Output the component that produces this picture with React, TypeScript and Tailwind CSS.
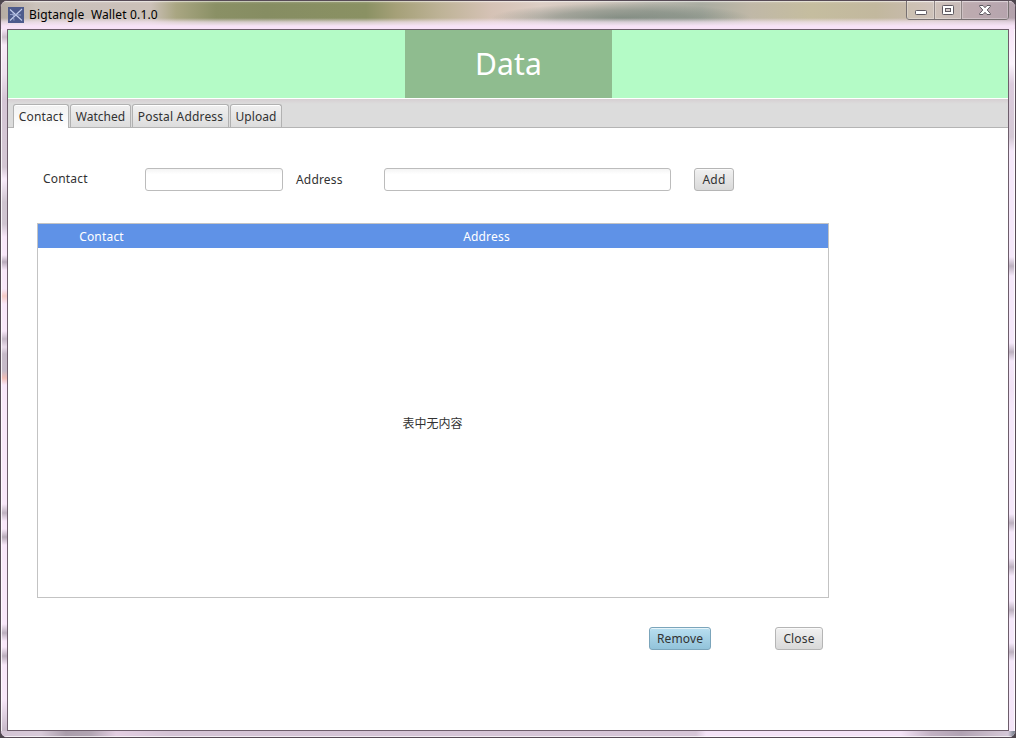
import type { ReactNode } from "react";

const tabs = [
  { label: "Contact", box: "w-[56px]", text: "tracking-[0.15px]" },
  { label: "Watched", box: "w-[61px]", text: "tracking-[0px]" },
  { label: "Postal Address", box: "w-[97px]", text: "tracking-[0.18px]" },
  { label: "Upload", box: "w-[52px]", text: "tracking-[0.05px]" },
];

function AppIcon() {
  return (
    <svg width="16" height="16" viewBox="0 0 16 16" className="shrink-0">
      <rect width="16" height="16" fill="#4d5b8c" />
      <path d="M2 2.5 L14 13.5 M14 2 L2 13.5" stroke="#c3cdec" strokeWidth="1.1" fill="none" />
      <path d="M2 7.5 L13 8 M5 6 L6 13.5" stroke="#a3b0d8" strokeWidth="0.8" fill="none" />
    </svg>
  );
}

function WindowControls() {
  return (
    <div className="flex h-[19px] w-[103px] shrink-0 rounded-b-[4px] border border-t-0 border-[#777071] bg-white/10">
      <div className="flex w-[28px] justify-center border-r border-[#8d8484] pt-[9px] shadow-[inset_0_0_0_1px_rgba(255,255,255,0.25)]">
        <svg width="12" height="5" viewBox="0 0 12 5">
          <rect x="0.5" y="0.5" width="11" height="4" rx="0.8" fill="#fff" stroke="#5e5960" />
        </svg>
      </div>
      <div className="flex w-[27px] justify-center border-r border-[#8d8484] pt-[4px] shadow-[inset_0_0_0_1px_rgba(255,255,255,0.25)]">
        <svg width="12" height="10" viewBox="0 0 12 10">
          <rect x="0.5" y="0.5" width="11" height="9" rx="0.8" fill="#fff" stroke="#5e5960" />
          <rect x="3.5" y="3.5" width="5" height="3" fill="#d5cbc9" stroke="#5e5960" />
        </svg>
      </div>
      <div className="flex flex-1 justify-center bg-[#a890a0]/30 pt-[4px] shadow-[inset_0_0_0_1px_rgba(255,255,255,0.25)]">
        <svg width="12" height="10" viewBox="0 0 12 10">
          <path d="M0.6 0.5 H4 L6 2.7 L8 0.5 H11.4 V1.4 L8.2 5 L11.4 8.6 V9.5 H8 L6 7.3 L4 9.5 H0.6 V8.6 L3.8 5 L0.6 1.4 Z" fill="#fff" stroke="#5e5960" />
        </svg>
      </div>
    </div>
  );
}

function Button({ children, className }: { children: ReactNode; className: string }) {
  return (
    <button type="button" className={`flex h-[23px] shrink-0 items-center justify-center rounded-[3px] border text-[12px] leading-4 tracking-[0.15px] text-[#323232] shadow-[inset_0_1px_0_rgba(255,255,255,0.65)] ${className}`}>
      {children}
    </button>
  );
}

export default function App() {
  return (
    <div className="h-[738px] w-[1016px] overflow-hidden bg-[#4d464d] font-['Noto_Sans','Noto_Sans_CJK_SC',sans-serif]">
      <div className="flex h-full flex-col overflow-hidden rounded-[7px] border border-[#574b56] bg-[#f4e5f6]">
        <header className="h-[28px] shrink-0 bg-[linear-gradient(90deg,#b5aca3_0px,#cbc2bb_35px,#cac0ba_100px,#cbc0b7_150px,#a9a682_175px,#8a9065_215px,#868d62_265px,#8a9163_365px,#a5a078_395px,#beb397_440px,#d5c2b5_490px,#dccdc4_540px,#cfc5bb_590px,#b5b4aa_650px,#a9aca1_700px,#c0b8a7_750px,#c5bd9f_810px,#c2b89e_875px,#c9bbb1_930px,#b3a2ac_1014px)]">
          <div className="flex h-full items-start justify-between bg-[linear-gradient(180deg,rgba(255,255,255,0.75)_0px,rgba(255,255,255,0.1)_1.5px,transparent_3px,transparent_17px,rgba(245,229,244,0.7)_21px,#f7e3f7_25px),radial-gradient(ellipse_130px_15px_at_620px_17px,rgba(112,127,117,0.75),rgba(112,127,117,0.5)_50%,transparent)] pr-[6px]">
            <div className="flex items-center gap-[5px] pt-[6px] pl-[7px]">
              <AppIcon />
              <span className="whitespace-pre text-[12px] leading-4 tracking-[0.15px] text-black">{"Bigtangle  Wallet 0.1.0"}</span>
            </div>
            <WindowControls />
          </div>
        </header>

        <div className="flex min-h-0 flex-1">
          <div className="w-[6px] shrink-0 border-l border-white/80 bg-[linear-gradient(180deg,#f7e4f7_0px,#cdbecb_8px,#f8eaf8_16px,#eee0ee_45px,#d5c5d5_70px,#d3c6d3_138px,#f8ebfa_150px,#cfc4d0_173px,#cfc4d0_195px,#f8e7f9_208px,#f8e7f9_226px,#b9aabb_233px,#f8e7f9_241px,#f8e7f9_260px,#f5cac5_267px,#f8e7f9_275px,#f8e7f9_302px,#c5b7c7_310px,#e9dbea_318px,#c6bac8_325px,#c6bac8_342px,#efbdb6_349px,#f8e7f9_356px,#f8e7f9_475px,#bfb1c0_484px,#f8e7f9_492px,#f8e7f9_500px,#b7aab8_508px,#f8e7f9_516px,#f8e7f9_595px,#bbaebd_604px,#f8e7f9_612px,#f8e7f9_618px,#bbaebd_627px,#f8e7f9_636px,#f8e7f9_670px,#c7b9c8_702px)]" />
          <main className="flex w-[1002px] shrink-0 flex-col border border-[#6d5d6b] bg-white">
            <div className="flex h-[68px] shrink-0 justify-center bg-[#b4fbc6] pl-[1px]">
              <h1 className="flex w-[207px] items-center justify-center bg-[#8fbc8f] text-[30px] leading-10 tracking-[0.2px] text-white">Data</h1>
            </div>
            <nav className="flex h-[30px] shrink-0 gap-px border-t border-b border-t-white border-b-[#b4b4b4] bg-[linear-gradient(180deg,#d6cfd2_0px,#dcdcdc_5px)] pt-[5px] pl-[5px]">
              {tabs.map((tab, index) => (
                <button
                  key={tab.label}
                  type="button"
                  className={`flex shrink-0 items-center justify-center rounded-t-[3px] border border-b-0 border-[#b1b1b1] text-[12px] leading-4 whitespace-nowrap text-[#323232] shadow-[inset_0_1px_0_white] ${tab.box} ${tab.text} ${index === 0 ? "-mb-px bg-linear-to-b from-[#f1f1f1] to-white pt-px" : "bg-linear-to-b from-[#f0f0f0] to-[#dddddd] pt-[2px]"}`}
                >
                  {tab.label}
                </button>
              ))}
            </nav>

            <section className="flex flex-1 flex-col pt-[40px] pl-[29px] text-[12px] leading-4 tracking-[0.18px] text-[#323232]">
              <div className="flex h-[23px] items-center">
                <label htmlFor="contact" className="w-[108px] pb-[2px] pl-[6px]">Contact</label>
                <input id="contact" className="h-[23px] w-[138px] rounded-[3px] border border-[#bcbcbc] bg-linear-to-b from-[#f4f4f4] via-white via-25% to-white" />
                <label htmlFor="address" className="w-[101px] pl-[13px]">Address</label>
                <input id="address" className="h-[23px] w-[287px] rounded-[3px] border border-[#bcbcbc] bg-linear-to-b from-[#f4f4f4] via-white via-25% to-white" />
                <Button className="ml-[23px] w-[40px] border-[#b5b5b5] bg-linear-to-b from-[#f1f1f1] to-[#d9d9d9]">Add</Button>
              </div>
              <div className="mt-[32px] flex h-[375px] w-[792px] flex-col border border-[#c3c3c3]">
                <div className="flex h-[24px] shrink-0 items-center bg-[#5f92e7] pt-[2px] text-white">
                  <div className="w-[127px] text-center">Contact</div>
                  <div className="w-[643px] text-center">Address</div>
                </div>
                <div className="flex flex-1 items-center justify-center pt-[2px] pr-px tracking-normal">表中无内容</div>
              </div>
              <div className="mt-[29px] flex pl-[612px]">
                <Button className="w-[62px] border-[#7ba5bb] bg-linear-to-b from-[#b9dff0] to-[#92c3da]">Remove</Button>
                <Button className="ml-[64px] w-[48px] border-[#b5b5b5] bg-linear-to-b from-[#f1f1f1] to-[#d9d9d9]">Close</Button>
              </div>
            </section>
          </main>
          <div className="flex-1 border-r border-white/80 bg-[linear-gradient(180deg,#f7e4f7_0px,#fbf3fc_35px,#dccbdd_55px,#d4c8d5_108px,#f5e8fa_122px,#f5e8fa_228px,#bcb0bf_237px,#f5e8fa_247px,#f5e8fa_314px,#bcb0bf_323px,#f5e8fa_332px,#f1e2f5_360px,#f5e8fa_380px,#f5e8fa_485px,#bcb0bf_494px,#f5e8fa_503px,#f5e8fa_529px,#bcb0bf_538px,#f5e8fa_547px,#f5e8fa_572px,#bcb0bf_581px,#f5e8fa_590px,#f5e8fa_614px,#bcb0bf_623px,#f5e8fa_632px,#f4e5f8_702px)]" />
        </div>
        <div className="h-[6px] shrink-0 border-b border-white/70 bg-[linear-gradient(90deg,#d3c4d4_0px,#d8cad9_40px,#aa9dab_65px,#b2a5b3_90px,#e3cee2_115px,#d4c3d5_170px,#d6c5d7_695px,#f4e3f7_705px,#f4e3f7_900px,#c2b1c3_930px,#b1a2b3_960px,#cec0cf_995px,#d5c8d9_1007px,#6f7b87_1014px)]" />
      </div>
    </div>
  );
}
